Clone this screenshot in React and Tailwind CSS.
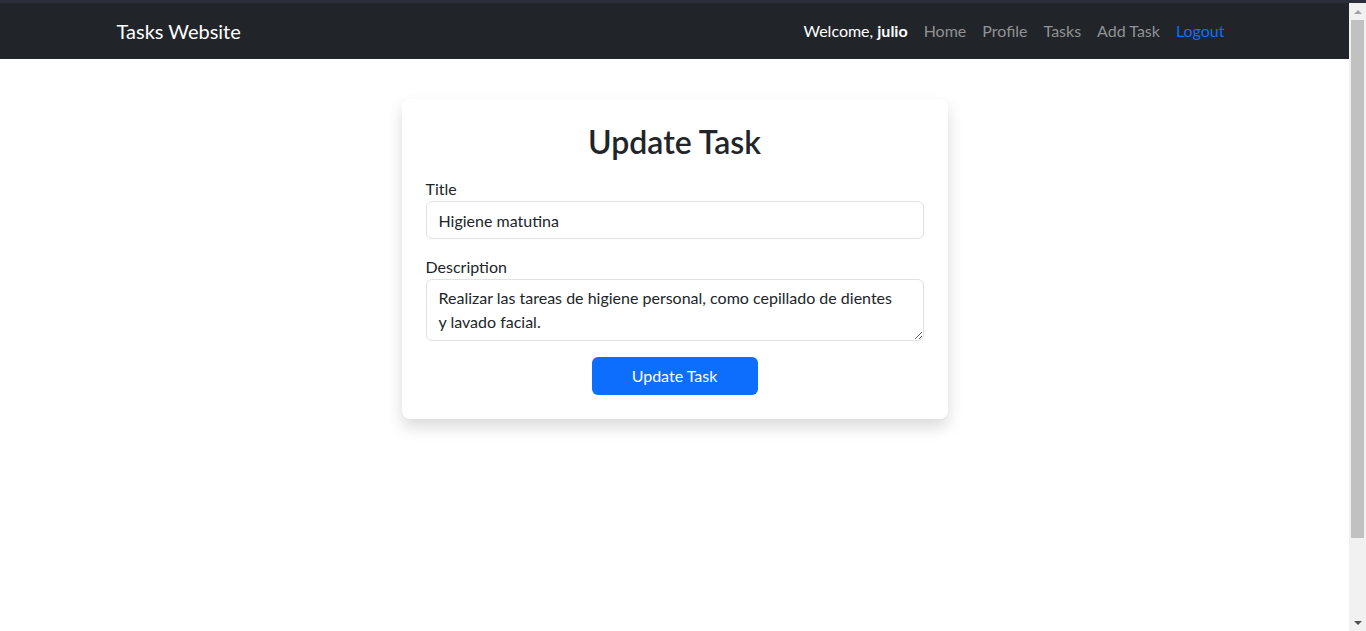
function NavBar() {
  return (
    <nav className="h-14 bg-[#212529]">
      <div className="mx-auto flex h-full w-[1140px] items-center justify-between px-3">
        <span className="text-[20px] text-white">Tasks Website</span>
        <div className="flex items-center text-base">
          <span className="pr-2 text-white">
            Welcome, <b className="font-bold">julio</b>
          </span>
          <a className="px-2 text-[#909294]">Home</a>
          <a className="px-2 text-[#909294]">Profile</a>
          <a className="px-2 text-[#909294]">Tasks</a>
          <a className="px-2 text-[#909294]">Add Task</a>
          <a className="px-2 text-[#0d6efd]">Logout</a>
        </div>
      </div>
    </nav>
  );
}

function Scrollbar() {
  return (
    <div className="flex w-[17px] shrink-0 flex-col items-center bg-[#f1f1f1]">
      <div className="flex h-[17px] w-full items-center justify-center">
        <div className="h-0 w-0 border-x-[4px] border-b-[4px] border-x-transparent border-b-[#a3a3a3]" />
      </div>
      <div className="h-[518px] w-[13px] bg-[#c1c1c1]" />
      <div className="flex-1" />
      <div className="flex h-[17px] w-full items-center justify-center">
        <div className="h-0 w-0 border-x-[4px] border-t-[4px] border-x-transparent border-t-[#505050]" />
      </div>
    </div>
  );
}

export default function App() {
  return (
    <div
      className="flex h-[631px] flex-col overflow-hidden bg-white text-[#212529]"
      style={{ fontFamily: '"Segoe UI", Lato, sans-serif' }}
    >
      <div className="h-[3px] shrink-0 bg-[#2c2e3b]" />
      <div className="flex min-h-0 flex-1">
        <div className="flex-1">
          <NavBar />
          <div className="mx-auto mt-10 w-[1140px] px-3">
            <div className="ml-[285px] w-[546px] rounded-lg bg-white p-6 shadow-[0_0.5rem_1rem_rgba(0,0,0,0.15)]">
              <h2 className="mb-4 text-center text-[32px] font-semibold leading-[1.2]">Update Task</h2>
              <div className="mb-4">
                <label className="block text-base leading-6">Title</label>
                <input
                  className="block h-[38px] w-full rounded-md border border-[#dee2e6] px-3 py-1.5 text-base leading-6 outline-none"
                  defaultValue="Higiene matutina"
                />
              </div>
              <div>
                <label className="block text-base leading-6">Description</label>
                <textarea
                  rows={2}
                  className="block h-[62px] w-full rounded-md border border-[#dee2e6] py-1.5 pl-3 pr-6 text-base leading-6 outline-none"
                  defaultValue="Realizar las tareas de higiene personal, como cepillado de dientes y lavado facial."
                />
              </div>
              <div className="mt-4 flex justify-center">
                <button className="h-[38px] w-[166px] rounded-md bg-[#0d6efd] text-base text-white">Update Task</button>
              </div>
            </div>
          </div>
        </div>
        <Scrollbar />
      </div>
    </div>
  );
}
